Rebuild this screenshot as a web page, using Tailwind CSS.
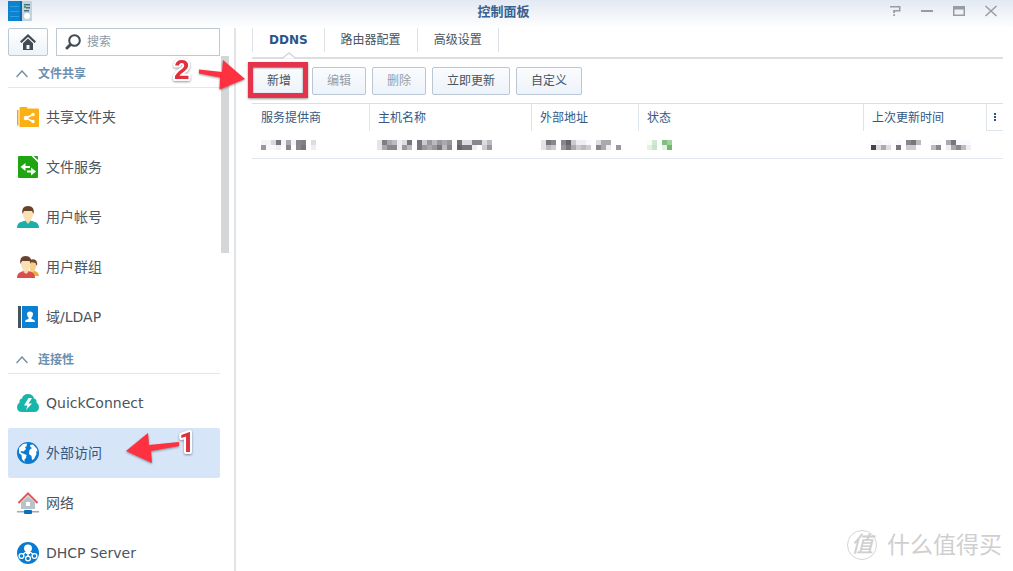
<!DOCTYPE html>
<html lang="zh-CN">
<head>
<meta charset="utf-8">
<meta name="viewport" content="width=device-width, initial-scale=1">
<title>控制面板</title>
<script src="https://cdn.jsdelivr.net/npm/@tailwindcss/browser@4"></script>
</head>
<body class="relative flex h-screen flex-col overflow-hidden bg-white font-['DejaVu_Sans','Noto_Sans_CJK_SC',sans-serif] text-xs text-[#4a545e]">

<header class="flex h-7 shrink-0 items-start bg-linear-to-b from-[#e3e9f3] to-white px-2">
  <div class="flex flex-1 pt-px">
    <svg class="h-5 w-6" viewBox="0 0 24 20" aria-hidden="true">
      <path fill="#0d83cf" d="M0 0h13v20H0z"/><path fill="#0a6db4" d="M12 0h2v20h-2z"/>
      <path stroke="#2ba4e6" stroke-width="1" d="M2 5.500h9M2 10.500h9M2 15.500h9"/>
      <path fill="#c3d3dc" d="M14 0h10v20H14z"/><path fill="#4d6f81" d="M16 3h6v1.500h-6zM18 6h4v1.500h-4zM16 9h5v1.500h-5z"/><path fill="#39aa68" d="M16 5h2v2h-2z"/>
      <circle cx="19" cy="15" r="3" fill="#fff"/>
    </svg>
  </div>
  <h1 class="pt-1 text-[13px] leading-4 font-bold text-[#3a608f]">控制面板</h1>
  <div class="flex flex-1 justify-end gap-4 pt-[3px] pr-1.5 text-[#959da3]">
    <button aria-label="帮助" class="flex size-4 items-center justify-center"><svg class="h-3 w-3" viewBox="0 0 12 12"><path fill="currentColor" d="M1 1h10.500v5.500H6V8H4.200V5H10V2.500H1zM4.200 9.200H6V11H4.200z"/></svg></button>
    <button aria-label="最小化" class="flex size-4 items-center justify-center"><svg class="h-3 w-3" viewBox="0 0 12 12"><path fill="currentColor" d="M0 5h12v2H0z"/></svg></button>
    <button aria-label="最大化" class="flex size-4 items-center justify-center"><svg class="h-3 w-3" viewBox="0 0 12 12"><path fill="currentColor" fill-rule="evenodd" d="M0 1h12v10H0zM1.500 4.500v5h9v-5z"/></svg></button>
    <button aria-label="关闭" class="flex size-4 items-center justify-center"><svg class="h-3 w-3" viewBox="0 0 12 12" stroke="currentColor" stroke-width="1.500"><path d="M.5 1l11 10M11.500 1l-11 10"/></svg></button>
  </div>
</header>

<div class="flex min-h-0 flex-1">
  <aside class="flex w-[236px] shrink-0 flex-col border-r-2 border-[#e2e4e7] pl-2">
    <div class="flex shrink-0 gap-2 pr-3.5">
      <button aria-label="主页" class="flex h-7 w-10 items-center justify-center rounded-xs border border-[#bcc8d4] bg-linear-to-b from-white to-[#edf3f9]">
        <svg class="h-4 w-4" viewBox="0 0 16 16"><path fill="#414b55" d="M8 0L0 7.500 1.500 9 8 3l6.500 6L16 7.500z"/><path fill="#414b55" fill-rule="evenodd" d="M8 4.500l5 4.700V16H3V9.200zM6.500 11v4h3v-4z"/></svg>
      </button>
      <label class="flex h-7 min-w-0 flex-1 items-center gap-1.5 border border-[#bdcad4] bg-white pl-2">
        <svg class="h-4 w-4 shrink-0" viewBox="0 0 16 16" fill="none" stroke="#414b55"><circle cx="9.500" cy="6.500" r="5.300" stroke-width="2"/><path stroke-width="3" stroke-linecap="round" d="M5 11l-3 3"/></svg>
        <input type="search" aria-label="搜索" placeholder="搜索" class="min-w-0 flex-1 bg-transparent outline-none placeholder:text-[#8c99a5]">
      </label>
    </div>

    <div class="flex min-h-0 flex-1 gap-px">
      <nav class="flex min-w-0 flex-1 flex-col gap-1 overflow-hidden pt-1 text-sm">
        <button class="flex h-7 shrink-0 items-center gap-2.5 border-b border-[#e2e8ed] pl-2 text-xs font-bold text-[#6b90b0]"><svg class="h-2 w-3" viewBox="0 0 12 8" fill="none" stroke="#7892a5" stroke-width="1.500"><path d="M.5 7L6 1l5.500 6"/></svg>文件共享</button>
        <ul class="shrink-0">
          <li><a href="#share" class="flex h-[50px] items-center gap-[7px] pl-[9px]">
            <svg class="h-[22px] w-[22px]" viewBox="0 0 22 22"><path fill="#f7a60a" d="M0 4h1.500v15.500H0z"/><path fill="#fbb116" d="M2.500 2q0-1 1-1h6q1 0 1 1.500H21q1 0 1 1V20q0 1-1 1H2.500z"/><path stroke="#fff" stroke-width="1.500" fill="none" d="M16 8.500l-7 3.500 7 3.500"/><g fill="#fff"><circle cx="9" cy="12" r="2.300"/><circle cx="16" cy="8.500" r="1.700"/><circle cx="16" cy="15.500" r="1.700"/></g></svg>共享文件夹</a></li>
          <li><a href="#files" class="flex h-[50px] items-center gap-[7px] pl-[9px]">
            <svg class="h-[22px] w-[22px]" viewBox="0 0 22 22"><path fill="#1ea511" d="M2 0h13l6 6v15q0 1-1 1H2q-1 0-1-1V1q0-1 1-1z"/><path fill="#fff" d="M14.500 0H17l4 4v2.500z"/><path fill="#1ea511" d="M16.500 0H20q1 0 1 1v3z"/><path fill="#fff" d="M3.500 11l5-4v3H13v2H8.500v3zM19 15.500l-5-4v3H10v2h4v3z"/></svg>文件服务</a></li>
          <li><a href="#user" class="flex h-[50px] items-center gap-[7px] pl-[9px]">
            <svg class="h-[22px] w-[22px]" viewBox="0 0 22 22"><path fill="#19afaa" d="M0 22q0-5 4-6l4.500-1.500h5L18 16q4 1 4 6z"/><path fill="#f6d6a1" d="M8.500 12h5v3L11 18l-2.500-3z"/><path fill="#fbe0b3" d="M6 5h10v4q-1 6-5 6T6 9z"/><path fill="#67432c" d="M5.500 8Q4 0 11 0t5.500 8L15 5H7z"/></svg>用户帐号</a></li>
          <li><a href="#group" class="flex h-[50px] items-center gap-[7px] pl-[9px]">
            <svg class="h-[22px] w-[22px]" viewBox="0 0 22 22"><path fill="#e9af43" d="M13 20v-5l3-1q6 2 6 6z"/><path fill="#f7cf8d" d="M13 5h6v5q-1 6-3 6h-3z"/><path fill="#71492e" d="M12 4q6-2 7.500 1t0 5l-1-3-5-1z"/><path fill="#d84e4f" d="M0 22q0-5 4-6l3-1.500h4L14 16q4 1 4 6z"/><path fill="#f6d6a1" d="M6.500 12h5v4L9 18l-2.500-2z"/><path fill="#fbe0b3" d="M4 5h9.500v4q-1 6-4.500 6T4 9z"/><path fill="#67432c" d="M3.500 8Q2 0 8.700 0t5.300 8l-1.500-3H5z"/></svg>用户群组</a></li>
          <li><a href="#ldap" class="flex h-[50px] items-center gap-[7px] pl-[9px]">
            <svg class="h-[22px] w-[22px]" viewBox="0 0 22 22"><path fill="#455560" d="M1 0h3v22H1z"/><path fill="#0a80d5" d="M5 0h15q1 0 1 1v20q0 1-1 1H5z"/><path fill="#fff" d="M10 8q0-2.500 3-2.500T16 8q0 2-1.500 3.500V13q3.500.5 3.500 3H8q0-2.500 3.500-3v-1.500Q10 10 10 8z"/></svg>域/LDAP</a></li>
        </ul>
        <button class="flex h-7 shrink-0 items-center gap-2.5 border-b border-[#e2e8ed] pl-2 text-xs font-bold text-[#6b90b0]"><svg class="h-2 w-3" viewBox="0 0 12 8" fill="none" stroke="#7892a5" stroke-width="1.500"><path d="M.5 7L6 1l5.500 6"/></svg>连接性</button>
        <ul class="shrink-0">
          <li><a href="#quickconnect" class="flex h-[50px] items-center gap-[7px] pl-[9px]">
            <svg class="h-[22px] w-[22px]" viewBox="0 0 22 22"><path fill="#18b5ac" d="M5 20q-5 0-5-5 0-3 2.500-4.500Q2 7 5 6.500 6 2 11 2t6 4.500q3 .5 2.500 4Q22 12 22 15q0 5-5 5z"/><path fill="#fff" d="M11.500 6L7 13.500h3.500L9 18l6-6.500h-3.500L15 6z"/></svg>QuickConnect</a></li>
          <li><a href="#external" aria-current="page" class="flex h-[50px] items-center gap-[7px] rounded-xs bg-[#d7e5f8] pl-[9px] text-[#345883]">
            <svg class="h-[22px] w-[22px]" viewBox="0 0 22 22"><circle cx="11" cy="11" r="11" fill="#0a7bd0"/><path fill="#fff" d="M2 6l4-4 4-.5-.5 3L8 5l1 2-2.500 2.500L5 9l-2 1 3 1.500 3.500 1.500L9 16l-1.500 1.500V20L5 17l-.5-4L2 11zM13 3l3-.5L20 7l.500 3-1.500-1 .5 3-2.500 5-2 1-.5-4-2.500-2 .5-4 2.500-2-1.500-1z"/></svg>外部访问</a></li>
          <li><a href="#network" class="flex h-[50px] items-center gap-[7px] pl-[9px]">
            <svg class="h-[22px] w-[22px]" viewBox="0 0 22 22"><path fill="#b9c2c8" fill-rule="evenodd" d="M11 4l7 6.500V17H4v-6.500zM9 10v4h4v-4z"/><path fill="none" stroke="#d95a5d" stroke-width="2" d="M1.500 11L11 1.500l9.500 9.500"/><path fill="#9caab3" d="M0 19h22v1.500H0z"/><rect x="7" y="18" width="8" height="4" rx="1" fill="#0a72bd"/></svg>网络</a></li>
          <li><a href="#dhcp" class="flex h-[50px] items-center gap-[7px] pl-[9px]">
            <svg class="h-[22px] w-[22px]" viewBox="0 0 22 22"><circle cx="11" cy="11" r="11" fill="#0a7bd0"/><path fill="#fff" d="M11 2.500q4 0 4 4 0 2-2 3.500V12H9v-2q-2-1.500-2-3.500 0-4 4-4z"/><path stroke="#fff" stroke-width="1.500" d="M11 10v5M9 10l-4 3M13 10l4 3"/><g fill="#0a7bd0" stroke="#fff" stroke-width="1.300"><circle cx="4.500" cy="14" r="2.400"/><circle cx="11" cy="16.500" r="2.400"/><circle cx="17.500" cy="14" r="2.400"/></g></svg>DHCP Server</a></li>
        </ul>
      </nav>
      <div class="mr-[5px] h-[197px] w-2 shrink-0 bg-[#d4d6d8]"></div>
    </div>
  </aside>

  <main class="flex min-w-0 flex-1 flex-col pr-2.5 pl-4">
    <div role="tablist" class="flex h-[31px] shrink-0 items-start border-b-2 border-[#dcdee0]">
      <button role="tab" aria-selected="true" class="relative h-6 border-x border-[#dde1e6] px-4 font-bold text-[#2a5486]">DDNS
        <svg class="absolute top-6 left-7 h-[7px] w-4" viewBox="0 0 16 7"><path fill="#fff" stroke="#d5d8da" stroke-width="1.500" d="M1 6.500L8 1l7 5.500"/></svg>
      </button>
      <button role="tab" class="h-6 border-r border-[#dde1e6] px-4">路由器配置</button>
      <button role="tab" class="h-6 border-r border-[#dde1e6] px-4">高级设置</button>
    </div>
    <div class="flex shrink-0 gap-1.5 py-2">
      <button class="h-7 rounded-xs border border-[#b9c6d4] bg-linear-to-b from-[#fafcfe] to-[#edf3fa] px-3.5">新增</button>
      <button disabled class="h-7 rounded-xs border border-[#b9c6d4] bg-linear-to-b from-[#fafcfe] to-[#edf3fa] px-3.5 text-[#969fa9]">编辑</button>
      <button disabled class="h-7 rounded-xs border border-[#b9c6d4] bg-linear-to-b from-[#fafcfe] to-[#edf3fa] px-3.5 text-[#969fa9]">删除</button>
      <button class="h-7 rounded-xs border border-[#b9c6d4] bg-linear-to-b from-[#fafcfe] to-[#edf3fa] px-3.5">立即更新</button>
      <button class="h-7 rounded-xs border border-[#b9c6d4] bg-linear-to-b from-[#fafcfe] to-[#edf3fa] px-3.5">自定义</button>
    </div>
    <table class="w-full table-fixed border-separate border-spacing-0 border-t border-[#d9e1e6] text-left">
      <thead class="text-[#345883]">
        <tr class="h-[27px]">
          <th scope="col" class="w-[118px] border-r border-[#dde4ea] pl-[9px] font-normal">服务提供商</th>
          <th scope="col" class="w-[162px] border-r border-[#dde4ea] pl-2 font-normal">主机名称</th>
          <th scope="col" class="w-[107px] border-r border-[#dde4ea] pl-2 font-normal">外部地址</th>
          <th scope="col" class="border-r border-[#dde4ea] pl-2 font-normal">状态</th>
          <th scope="col" class="w-[123px] border-r border-[#dde4ea] pl-2 font-normal">上次更新时间</th>
          <th scope="col" class="w-4 border-b border-[#dde4ea]"><button aria-label="列选项" class="flex w-full justify-center"><svg class="h-2 w-0.5" viewBox="0 0 2 8"><path fill="#2a5486" d="M0 0h2v2H0zM0 3h2v2H0zM0 6h2v2H0z"/></svg></button></th>
        </tr>
      </thead>
      <tbody>
        <tr class="h-7">
          <td class="border-b border-[#e2e8ed] pt-px pl-[9px]"><svg class="mosaic h-2.5" data-top="f4 f4 d8 77 f4 aa f4 88 80 ff dd" data-bottom="99 f8 f8 ee ff 88 ff 88 77 ff ee"></svg></td>
          <td class="border-b border-[#e2e8ed] pt-px pl-[7px]"><svg class="mosaic h-2.5" data-top="e4 80 aa bb ee dd 77 ff 77 cc 99 bb 99 aa 99 ff 77 dd dd 88 88 dd bb" data-bottom="e4 aa 88 88 ee 99 bb ff 77 99 aa 99 77 bb 88 ff 66 77 77 ee ff cc 99"></svg></td>
          <td class="border-b border-[#e2e8ed] pt-px pl-[9px]"><svg class="mosaic h-2.5" data-top="e4 77 88 ff 88 66 cc ee ee fa ff dd aa aa ff ff" data-bottom="e4 bb cc ff 99 77 aa cc bb cc ff 88 aa ee ff 99"></svg></td>
          <td class="border-b border-[#e2e8ed] pt-px pl-2"><svg class="mosaic h-2.5" data-hue="green" data-top="fa d0 ff 80 a0" data-bottom="e4 c8 ff e4 70"></svg></td>
          <td class="border-b border-[#e2e8ed] pt-px pl-[7px]"><svg class="mosaic h-2.5" data-top="fa f4 fa fa ff fa ff 88 77 bb ff ff fa fa ff aa 77 fa fa fa" data-bottom="44 dd aa dd ff 77 ff cc cc fa ff ff bb 88 ff ee aa 88 bb ee"></svg></td>
          <td class="border-b border-[#e2e8ed]"></td>
        </tr>
      </tbody>
    </table>
  </main>
</div>

<svg class="pointer-events-none absolute top-0 left-0 h-[480px] w-[320px] drop-shadow-[0_1px_1px_rgba(0,0,0,0.4)]" viewBox="0 0 320 480" aria-label="操作步骤">
  <g fill="#ff3040">
    <path d="M199 69.500v4l21 4-.5 12L245 79l-22-19-1 12z"/>
    <path d="M126 451l22-18 1 12 30-3v4l-28 5 1 12z"/>
  </g>
  <rect x="250.500" y="64.500" width="55" height="31" fill="none" stroke="#e4344b" stroke-width="5"/>
  <g fill="#e0303f" stroke="#fff" stroke-width="4" stroke-linejoin="round" paint-order="stroke" font-weight="bold" font-size="28">
    <text x="174" y="79" font-family="Liberation Sans, sans-serif">2</text><text x="179" y="452" font-family="Roboto, sans-serif">1</text>
  </g>
</svg>

<div class="pointer-events-none absolute right-[11px] bottom-2 flex items-center gap-2.5 text-[#cfcfcf]">
  <span class="flex size-[30px] items-center justify-center rounded-full border border-[#d5d5d5] text-[22px] leading-none font-medium italic">值</span>
  <span class="text-[23px] leading-9">什么值得买</span>
</div>

<script>
  // Obscured values are drawn as two rows of 5px blocks, one brightness byte per block.
  document.querySelectorAll('.mosaic').forEach(svg => {
    const rows = [svg.dataset.top.split(' '), svg.dataset.bottom.split(' ')];
    svg.setAttribute('width', rows[0].length * 5);
    svg.setAttribute('shape-rendering', 'crispEdges');
    rows.forEach((row, y) => row.forEach((shade, x) => {
      const v = parseInt(shade, 16);
      const rect = document.createElementNS('http://www.w3.org/2000/svg', 'rect');
      rect.setAttribute('x', x * 5);
      rect.setAttribute('y', y * 5);
      rect.setAttribute('width', 5);
      rect.setAttribute('height', 5);
      rect.setAttribute('fill', svg.dataset.hue ? `rgb(${v},${Math.min(255, Math.round(v * 0.5 + 127))},${v})` : `rgb(${v},${v},${Math.min(255, v + 4)})`);
      svg.append(rect);
    }));
  });
</script>
</body>
</html>
